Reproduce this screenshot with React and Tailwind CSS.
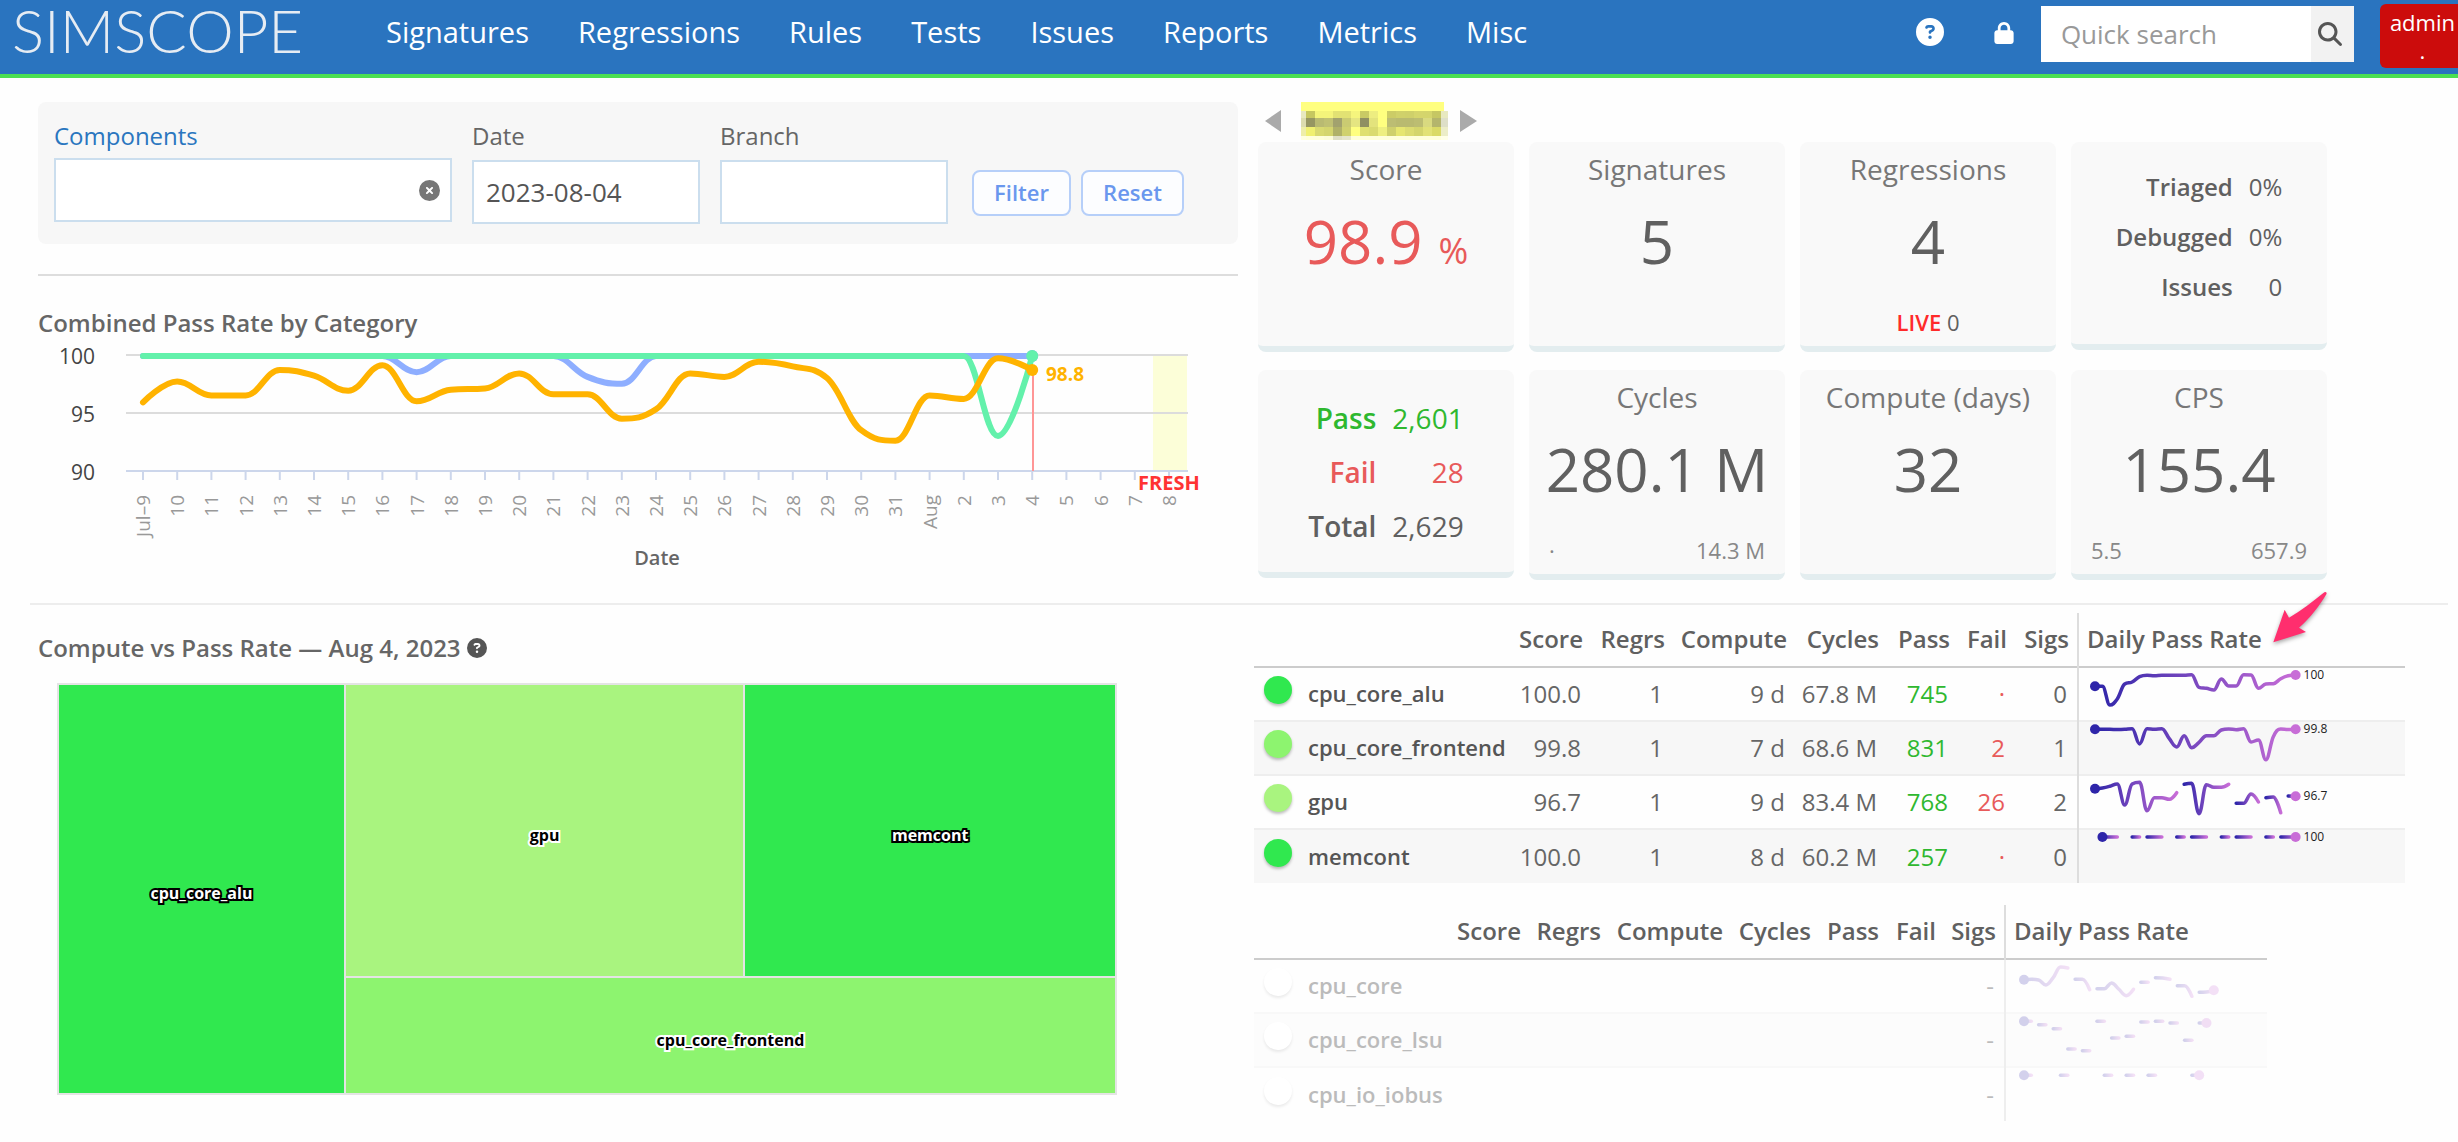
import { FaCircleQuestion, FaCircleXmark, FaLock, FaMagnifyingGlass } from 'react-icons/fa6';

const NAV_ITEMS = ['Signatures', 'Regressions', 'Rules', 'Tests', 'Issues', 'Reports', 'Metrics', 'Misc'];

const DAYS = [
  'Jul–9', '10', '11', '12', '13', '14', '15', '16', '17', '18', '19', '20', '21', '22', '23', '24',
  '25', '26', '27', '28', '29', '30', '31', 'Aug', '2', '3', '4', '5', '6', '7', '8',
];

const ORANGE = [
  96, 97.8, 96.6, 96.6, 98.8, 98.3, 97, 99.2, 96.1, 97.1, 97.2, 98.5, 96.7, 96.7, 94.6, 95.4, 98.5,
  98.2, 99.5, 99.1, 98.1, 93.6, 92.7, 96.6, 96.3, 99.8, 98.8,
];
const GREEN = [...Array(25).fill(100), 93.1, 100];
const BLUE = [...Array(8).fill(100), 98.6, 100, 100, 100, 100, 98.2, 97.6, ...Array(12).fill(100)];

const COLUMNS = ['Score', 'Regrs', 'Compute', 'Cycles', 'Pass', 'Fail', 'Sigs'];

// Each trend is a list of unbroken runs: [first day, [y, y, ...]]
const flat = (y, runs) => runs.map(([start, length]) => [start, Array(length).fill(y)]);

const COMPONENTS = [
  {
    name: 'cpu_core_alu',
    color: 'bg-[#30e84f]',
    cells: ['100.0', '1', '9 d', '67.8 M', '745', '·', '0'],
    last: '100',
    trend: [[0, [18.3, 18.3, 37, 31, 16, 14, 8.7, 7.3, 7.7, 7.3, 7.3, 7.3, 7.3, 6.7, 19.3, 20.3, 22, 11, 18, 18, 6.7, 7, 20.3, 16, 15.7, 10.7, 7.7, 7]]],
  },
  {
    name: 'cpu_core_frontend',
    color: 'bg-[#8df46f]',
    cells: ['99.8', '1', '7 d', '68.6 M', '831', '2', '1'],
    last: '99.8',
    trend: [[0, [7.3, 7.3, 7.3, 7.5, 7.3, 6.7, 22, 6.7, 7.3, 6.7, 16.7, 25, 13.7, 25.7, 20.3, 13.7, 13.7, 8, 7, 7.7, 6.7, 20, 18, 37.7, 14.7, 7, 7.5, 7.3]]],
  },
  {
    name: 'gpu',
    color: 'bg-[#a9f47f]',
    cells: ['96.7', '1', '9 d', '83.4 M', '768', '26', '2'],
    last: '96.7',
    trend: [
      [0, [12.7, 12, 10.3, 8, 29, 8, 6.3, 34.7, 21.7, 21.7, 23.3, 16.7]],
      [12, [8.3, 7.3, 37.7, 8.7, 11.3, 11.3, 8.3]],
      [19, [27.3, 27.3, 18, 26]],
      [23, [21.7, 21, 36.7]],
      [26, [20, 20.3]],
    ],
  },
  {
    name: 'memcont',
    color: 'bg-[#30e84f]',
    cells: ['100.0', '1', '8 d', '60.2 M', '257', '·', '0'],
    last: '100',
    trend: flat(7, [[1, 3], [5, 2], [7, 3], [11, 2], [13, 3], [17, 2], [19, 3], [23, 2], [25, 3]]),
  },
];

const INACTIVE = [
  {
    name: 'cpu_core',
    trend: [
      [0, [19.7, 19.3, 20, 25, 17.7, 7, 8]],
      [7, [19.3, 19.3, 29.7]],
      [10, [28.7, 28.7, 23, 29.3, 35.7, 29.3]],
      [16, [22.3, 22.3]],
      [18, [17.7, 18, 19.3]],
      [21, [25.7, 25.7, 36.3]],
      [24, [32.3, 32, 30.3]],
    ],
  },
  {
    name: 'cpu_core_lsu',
    trend: [7.3, 10.7, 14.7, 35, 36.7, 7.3, 24, 22.3, 8, 7.3, 9, 26.3, 9].map((y, i) => [i * 2, [y, y]]),
  },
  { name: 'cpu_io_iobus', trend: flat(7.3, [[0, 2], [5, 2], [11, 2], [14, 2], [17, 2], [23, 2]]) },
];

// Spline whose control points never overshoot the neighbouring values
const splinePath = (pts) => {
  let d = `M${pts[0][0]} ${pts[0][1]}`;
  let prevRight = pts[0];
  for (let i = 1; i < pts.length; i++) {
    const [x, y] = pts[i];
    let left = [x, y];
    let right = [x, y];
    if (i < pts.length - 1) {
      const [lx, ly] = pts[i - 1];
      const [nx, ny] = pts[i + 1];
      const leftX = (1.5 * x + lx) / 2.5;
      const rightX = (1.5 * x + nx) / 2.5;
      let leftY = (1.5 * y + ly) / 2.5;
      let rightY = (1.5 * y + ny) / 2.5;
      const shift = ((rightY - leftY) * (rightX - x)) / (rightX - leftX) + y - rightY;
      leftY += shift;
      rightY += shift;
      if (leftY > ly && leftY > y) {
        leftY = Math.max(ly, y);
        rightY = 2 * y - leftY;
      } else if (leftY < ly && leftY < y) {
        leftY = Math.min(ly, y);
        rightY = 2 * y - leftY;
      }
      if (rightY > ny && rightY > y) {
        rightY = Math.max(ny, y);
        leftY = 2 * y - rightY;
      } else if (rightY < ny && rightY < y) {
        rightY = Math.min(ny, y);
        leftY = 2 * y - rightY;
      }
      left = [leftX, leftY];
      right = [rightX, rightY];
    }
    d += `C${prevRight[0]} ${prevRight[1]} ${left[0]} ${left[1]} ${x} ${y}`;
    prevRight = right;
  }
  return d;
};

const Sparkline = ({ id, trend, last, step }) => {
  const runs = trend.map(([start, ys]) => ys.map((y, i) => [16 + (start + i) * step, y]));
  const first = runs[0][0];
  const end = runs[runs.length - 1].at(-1);
  return (
    <svg width="264" height="52" className="block overflow-visible">
      {runs.map((pts, i) => (
        <g key={i}>
          <linearGradient id={`${id}-${i}`} gradientUnits="userSpaceOnUse" x1={pts[0][0]} x2={pts.at(-1)[0]} y1="0" y2="0">
            <stop offset="0" stopColor="#2e25a9" />
            <stop offset="1" stopColor="#c86dd7" />
          </linearGradient>
          <path d={splinePath(pts)} fill="none" stroke={`url(#${id}-${i})`} strokeWidth="3.5" strokeLinecap="round" />
        </g>
      ))}
      <circle cx={first[0]} cy={first[1]} r="5" fill="#2e25a9" />
      <circle cx={end[0]} cy={end[1]} r="5" fill="#c86dd7" />
      {last && <text x={end[0] + 8} y={end[1] + 4} className="text-[12px] fill-[#222]">{last}</text>}
    </svg>
  );
};

const Header = () => (
  <header className="flex items-start h-[78px] bg-[#2a74bf] border-b-4 border-[#4be052] text-white">
    <a href="#" className="w-[372px] shrink-0 pl-3 font-['Lato'] font-light text-6xl leading-[60px] text-[#e6ecf3]">
      SIMSCOPE
    </a>
    <nav className="flex gap-[49px] pl-[14px] pt-3 text-[29px] leading-10">
      {NAV_ITEMS.map((item) => (
        <a key={item} href="#">{item}</a>
      ))}
    </nav>
    <div className="flex items-start ml-auto">
      <a href="#" aria-label="Help" className="mt-[18px] mr-[49px]"><FaCircleQuestion className="size-7" /></a>
      <a href="#" aria-label="Lock" className="mt-[22px] mr-[26px]"><FaLock className="size-[22px]" /></a>
      <form className="flex mt-[6px] mr-[26px] h-14 bg-white">
        <input
          type="text"
          aria-label="Quick search"
          placeholder="Quick search"
          className="w-[270px] pl-5 text-[26px] text-[#555] placeholder:text-[#999] outline-none"
        />
        <button type="button" aria-label="Search" className="flex items-center justify-center w-[43px] pr-1 bg-[#f2f2f2] text-[#555]">
          <FaMagnifyingGlass className="size-6" />
        </button>
      </form>
      <a href="#" className="flex flex-col items-center mt-1 h-16 pl-[10px] pr-[3px] bg-[#cc0c0c] rounded-l-md text-[22px] leading-7 pt-1">
        <span>admin</span>
        <span>.</span>
      </a>
    </div>
  </header>
);

const FilterForm = () => (
  <form className="flex items-end h-[142px] px-4 pb-5 bg-[#f7f7f7] rounded-lg text-2xl text-[#666]">
    <div className="pb-[2px]">
      <label htmlFor="components" className="block leading-8 mb-[6px] text-[#2a76bf]">Components</label>
      <div className="relative">
        <input id="components" type="text" className="block w-[398px] h-16 px-3 bg-white border-2 border-[#cbdeee]" />
        <button type="button" aria-label="Clear components" className="absolute right-3 top-[22px] text-[#777]">
          <FaCircleXmark className="size-[21px]" />
        </button>
      </div>
    </div>
    <div className="ml-5">
      <label htmlFor="date" className="block leading-8 mb-2">Date</label>
      <input id="date" type="text" defaultValue="2023-08-04" className="block w-[228px] h-16 px-3 bg-white border-2 border-[#cbdeee] text-[26px] text-[#555]" />
    </div>
    <div className="ml-5">
      <label htmlFor="branch" className="block leading-8 mb-2">Branch</label>
      <input id="branch" type="text" className="block w-[228px] h-16 px-3 bg-white border-2 border-[#cbdeee] text-[26px] text-[#555]" />
    </div>
    <div className="flex gap-[10px] ml-6 mb-2 text-[22px] font-semibold text-[#6a97ee]">
      <button type="button" className="w-[99px] h-[46px] bg-[#fcfdff] border-2 border-[#b6cff9] rounded-lg">Filter</button>
      <button type="button" className="w-[103px] h-[46px] bg-[#fcfdff] border-2 border-[#b6cff9] rounded-lg">Reset</button>
    </div>
  </form>
);

const CHART_SERIES = [
  { values: BLUE, color: '#8eaeff' },
  { values: GREEN, color: '#63f1ab' },
  { values: ORANGE, color: '#ffb300' },
];

const dayX = (i) => 105 + i * 34.2;
const rateY = (v) => 17 + (100 - v) * 11.6;

const PassRateChart = () => (
  <svg viewBox="0 0 1200 240" className="block w-full h-auto">
    <rect x="1115" y="17" width="34" height="115" fill="#fcfed8" />
    {[100, 95, 90].map((v) => (
      <g key={v}>
        <line x1="88" x2="1150" y1={rateY(v) - 1} y2={rateY(v) - 1} stroke={v === 90 ? '#ccd6eb' : '#dcdcdc'} strokeWidth="2" />
        <text x="57" y={rateY(v) + 8} textAnchor="end" className="text-[21px] fill-[#444]">{v}</text>
      </g>
    ))}
    {DAYS.map((day, i) => (
      <g key={i}>
        <line x1={dayX(i)} x2={dayX(i)} y1="133" y2="141" stroke="#ccd6eb" strokeWidth="2" />
        <text transform={`translate(${dayX(i) + 7} 156) rotate(-90)`} textAnchor="end" className="text-[19px] fill-[#999]">{day}</text>
      </g>
    ))}
    <line x1="995" x2="995" y1="32" y2="132" stroke="#ff9696" strokeWidth="2" />
    {CHART_SERIES.map(({ values, color }) => {
      const pts = values.map((v, i) => [dayX(i), rateY(v)]);
      const end = pts.at(-1);
      return (
        <g key={color}>
          <path d={splinePath(pts)} fill="none" stroke={color} strokeWidth="6" strokeLinecap="round" strokeLinejoin="round" />
          <circle cx={end[0]} cy={end[1]} r="6" fill={color} />
        </g>
      );
    })}
    <text x="1008" y="42" className="text-[19px] font-bold fill-[#ffb300]">98.8</text>
    <text x="1100" y="151" className="text-[20px] font-bold fill-[#ff3333]">FRESH</text>
    <text x="619" y="226" textAnchor="middle" className="text-[20px] font-semibold fill-[#666]">Date</text>
  </svg>
);

const Card = ({ title, value, unit, red, children }) => (
  <div className="flex flex-col items-center h-[210px] bg-[#f9f9f9] border-b-6 border-[#e3edef] rounded-lg text-[#606060]">
    <h3 className="mt-[7px] text-[28px] leading-10 text-[#777]">{title}</h3>
    <p className={`mt-4 text-6xl leading-[72px] whitespace-nowrap ${red ? 'text-[#e85a5a]' : ''}`}>
      {value}
      {unit && <span className="ml-4 text-4xl">{unit}</span>}
    </p>
    <div className="w-full mt-auto mb-2 px-5 text-[22px] leading-8">{children}</div>
  </div>
);

const ListCard = ({ rows, className }) => (
  <div className={`flex items-center justify-center h-[208px] bg-[#f9f9f9] border-b-6 border-[#e3edef] rounded-lg text-[#606060] ${className}`}>
    <table>
      <tbody>
        {rows.map(([label, value, color]) => (
          <tr key={label} className={color}>
            <th scope="row" className="pr-4 text-right font-semibold">{label}</th>
            <td className="text-right">{value}</td>
          </tr>
        ))}
      </tbody>
    </table>
  </div>
);

const MOSAIC = [
  ['#e8e9c0', '#c6c760', '#f4f47a', '#f4f47a', '#e2e273', '#e2e273', '#f5f57d', '#c9ca64', '#eded80', '#ffff80', '#cccc66', '#d0d16a', '#cfd06a', '#d5d56c', '#d4d56c', '#c6c763', '#e8e9c0'],
  ['#dcdcae', '#969662', '#b9ba72', '#bfc073', '#a2a26e', '#cacb72', '#e5e581', '#8f8f62', '#e3e37c', '#ffff80', '#bcbd73', '#b9ba70', '#b9ba70', '#bcbd72', '#d9da80', '#b4b56c', '#dedfc8'],
  ['#eeeea8', '#f0f070', '#d9da70', '#d4d56e', '#b0b168', '#d0d16e', '#ffff80', '#dfe070', '#dadb70', '#eeef80', '#cfd06c', '#e6e670', '#dcdc70', '#d4d56c', '#e2e276', '#dada66', '#ecedc8'],
  ['#ffffe0', '#ffffda', '#ffffda', '#fdfdda', '#e0e0c6', '#e6e6cc', '#ffffda', '#ffffda', '#ffffda', '#ffffda', '#ffffda', '#ffffda', '#ffffda', '#ffffda', '#ffffda', '#ffffda', '#ffffe8'],
];
const MOSAIC_TOPS = [9, 16, 25, 34, 38];

const DatePicker = () => (
  <div className="flex items-start h-10 pl-[11px]">
    <button type="button" aria-label="Previous day" className="mt-2">
      <svg width="16" height="22" className="block fill-[#aaa]"><path d="M0 11 16 0V22Z" /></svg>
    </button>
    <svg width="147" height="38" className="mx-5 mr-3 block" shapeRendering="crispEdges">
      <rect width="143" height="9" fill="#ffff80" />
      {MOSAIC.map((row, r) =>
        row.map((color, c) => (
          <rect
            key={`${r}-${c}`}
            x={c === 0 ? 0 : c * 9 - 4}
            y={MOSAIC_TOPS[r]}
            width={c === 0 ? 5 : c === 16 ? 7 : 9}
            height={MOSAIC_TOPS[r + 1] - MOSAIC_TOPS[r]}
            fill={color}
          />
        ))
      )}
    </svg>
    <button type="button" aria-label="Next day" className="mt-2">
      <svg width="17" height="22" className="block fill-[#aaa]"><path d="M17 11 0 0V22Z" /></svg>
    </button>
  </div>
);

const Tile = ({ name, className, dark }) => (
  <div className={`flex items-center justify-center pt-2 ${className}`}>
    <span
      className={
        dark
          ? 'text-white [-webkit-text-stroke:4px_black] [paint-order:stroke_fill]'
          : 'text-black [-webkit-text-stroke:4px_white] [paint-order:stroke_fill]'
      }
    >
      {name}
    </span>
  </div>
);

const Treemap = () => (
  <div className="grid grid-cols-[286fr_399fr_371fr] grid-rows-[294fr_116fr] gap-[2px] ml-[19px] mr-[121px] mt-[19px] h-[412px] p-[2px] bg-[#e4e4e4] text-base font-bold">
    <Tile name="cpu_core_alu" className="row-span-2 bg-[#30e84f]" dark />
    <Tile name="gpu" className="bg-[#a9f47f]" />
    <Tile name="memcont" className="bg-[#30e84f]" dark />
    <Tile name="cpu_core_frontend" className="col-span-2 bg-[#8df46f]" />
  </div>
);

const TableHead = ({ children }) => (
  <thead>
    <tr className="h-[54px] border-b-2 border-[#ccc]">
      <td colSpan={2} />
      {COLUMNS.map((col) => (
        <th key={col} className="pr-2 pb-[2px] text-right font-semibold">{col}</th>
      ))}
      <th className="pl-2 pb-[2px] text-left font-semibold border-l-2 border-[#ddd]">
        <span className="relative">
          Daily Pass Rate
          {children}
        </span>
      </th>
    </tr>
  </thead>
);

const cellColor = (i) => (i === 4 ? 'text-[#2fb82f]' : i === 5 ? 'text-[#e85a5a]' : 'text-[#666]');

const ActiveTable = () => (
  <table className="w-[1151px] table-fixed border-collapse text-2xl text-[#606060] whitespace-nowrap">
    <colgroup>
      <col className="w-[46px]" />
      <col className="w-[211px]" />
      <col className="w-[80px]" />
      <col className="w-[82px]" />
      <col className="w-[122px]" />
      <col className="w-[92px]" />
      <col className="w-[71px]" />
      <col className="w-[57px]" />
      <col className="w-[63px]" />
      <col />
    </colgroup>
    <TableHead>
      <svg viewBox="627 26 180 174" width="60" height="58" className="absolute left-full bottom-2 ml-2 overflow-visible drop-shadow-[0_2px_2px_rgba(0,0,0,0.35)]">
        <path d="M637 186 671 88 684 112C720 92 752 66 790 36Q797 32 797 40C774 78 748 112 714 142L735 155Z" fill="#ff2e6e" />
      </svg>
    </TableHead>
    <tbody>
      {COMPONENTS.map(({ name, color, cells, last, trend }) => (
        <tr key={name} className="h-[54px] border-t-2 border-[#eee] even:bg-[#f7f7f7]">
          <td className="pl-[10px] pb-2"><span className={`block size-7 rounded-full shadow-[0_2px_3px_rgba(0,0,0,0.25)] ${color}`} /></td>
          <td className="pl-2 text-[22px] font-semibold text-[#555]">{name}</td>
          {cells.map((cell, i) => (
            <td key={i} className={`pr-[10px] text-right ${cellColor(i)}`}>{cell}</td>
          ))}
          <td className="align-top border-l-2 border-[#ddd]"><Sparkline id={name} trend={trend} last={last} step={7.43} /></td>
        </tr>
      ))}
    </tbody>
  </table>
);

const InactiveTable = () => (
  <table className="w-[1013px] mt-[22px] table-fixed border-collapse text-2xl text-[#606060] whitespace-nowrap">
    <colgroup>
      <col className="w-[46px]" />
      <col className="w-[148px]" />
      <col className="w-[81px]" />
      <col className="w-[80px]" />
      <col className="w-[122px]" />
      <col className="w-[88px]" />
      <col className="w-[68px]" />
      <col className="w-[57px]" />
      <col className="w-[61px]" />
      <col />
    </colgroup>
    <TableHead />
    <tbody>
      {INACTIVE.map(({ name, trend }) => (
        <tr key={name} className="h-[54px] border-t-2 border-[#f8f8f8] even:bg-[#fcfcfc] text-[#bbb]">
          <td className="pl-[10px] pb-2"><span className="block size-7 rounded-full bg-white shadow-[0_2px_3px_rgba(0,0,0,0.08)]" /></td>
          <td className="pl-2 text-[22px] font-semibold">{name}</td>
          {COLUMNS.map((col) => (
            <td key={col} className="pr-[10px] text-right">{col === 'Sigs' ? '-' : ''}</td>
          ))}
          <td className="pl-[2px] align-top border-l-2 border-[#eee]"><div className="opacity-20"><Sparkline id={name} trend={trend} step={7.3} /></div></td>
        </tr>
      ))}
    </tbody>
  </table>
);

const App = () => (
  <div className="min-h-screen bg-[#fefefe] font-['Open_Sans','Noto_Sans',sans-serif]">
    <Header />
    <main className="pl-[38px] pr-1 pt-6">
      <div className="grid grid-cols-2 gap-4">
        <section>
          <FilterForm />
          <hr className="mt-[30px] border-t-2 border-[#ddd]" />
          <h2 className="mt-[31px] text-2xl leading-8 font-semibold text-[#666]">Combined Pass Rate by Category</h2>
          <PassRateChart />
        </section>
        <section>
          <DatePicker />
          {/* Summary cards */}
          <div className="grid grid-cols-4 gap-x-[15px] gap-y-[18px] ml-1 max-w-[1069px]">
            <Card title="Score" value="98.9" unit="%" red />
            <Card title="Signatures" value="5" />
            <Card title="Regressions" value="4">
              <p className="text-center"><span className="font-semibold text-[#ff2a2a]">LIVE</span> 0</p>
            </Card>
            <ListCard className="text-2xl leading-[50px] pb-3" rows={[['Triaged', '0%'], ['Debugged', '0%'], ['Issues', '0']]} />
            <ListCard
              className="text-[28px] leading-[54px] pt-[2px]"
              rows={[['Pass', '2,601', 'text-[#2fb82f]'], ['Fail', '28', 'text-[#e85a5a]'], ['Total', '2,629']]}
            />
            <Card title="Cycles" value="280.1 M">
              <p className="flex justify-between text-[#888]"><span>·</span><span>14.3 M</span></p>
            </Card>
            <Card title="Compute (days)" value="32" />
            <Card title="CPS" value="155.4">
              <p className="flex justify-between text-[#888]"><span>5.5</span><span>657.9</span></p>
            </Card>
          </div>
        </section>
      </div>
      <hr className="-ml-2 mr-[6px] mt-[23px] border-t-2 border-[#ededed]" />
      <div className="grid grid-cols-2 gap-4">
        <section>
          <h2 className="flex items-center gap-[6px] mt-[27px] text-2xl leading-8 font-semibold text-[#666]">
            Compute vs Pass Rate — Aug 4, 2023
            <FaCircleQuestion className="size-5 text-[#555]" />
          </h2>
          <Treemap />
        </section>
        <section className="pt-2">
          <ActiveTable />
          <InactiveTable />
        </section>
      </div>
    </main>
  </div>
);

export default App;
